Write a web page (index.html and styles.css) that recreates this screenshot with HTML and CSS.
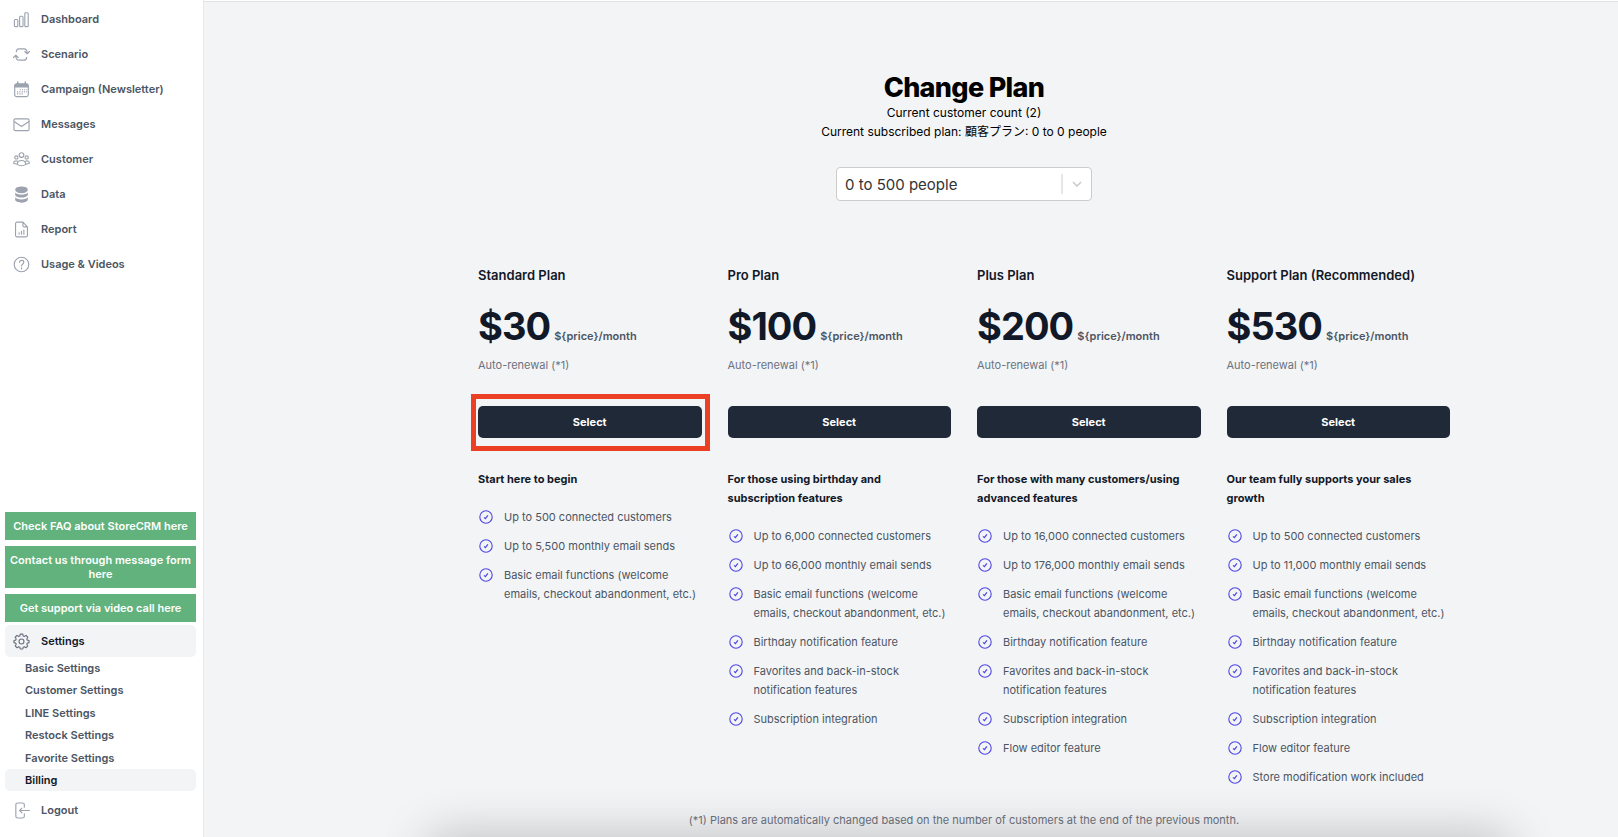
FILE: index.html
```html
<!DOCTYPE html>
<html lang="en">
<head>
    <meta charset="UTF-8">
    <meta name="viewport" content="width=device-width, initial-scale=1.0">
    <title>Change Plan - StoreCRM</title>
    <link rel="stylesheet" href="styles.css">
</head>
<body>
    <svg class="sprite" aria-hidden="true">
        <symbol id="check" viewBox="0 0 16 16">
            <circle cx="8" cy="8" r="6.2" fill="none" stroke="currentColor" stroke-width="1.1"/>
            <path d="M6 8.4l1.4 1.3 2.5-3.4" fill="none" stroke="currentColor" stroke-width="1.2"/>
        </symbol>
    </svg>

    <aside class="sidebar">
        <nav class="nav">
            <a class="nav-item" href="#">
                <svg class="icon" viewBox="0 0 18 18"><rect x="1.5" y="9" width="3.6" height="7.5" rx="1"/><rect x="7" y="5.5" width="3.6" height="11" rx="1"/><rect x="12.5" y="1.8" width="3.6" height="14.7" rx="1"/></svg>
                Dashboard
            </a>
            <a class="nav-item" href="#">
                <svg class="icon" viewBox="0 0 18 18"><path d="M3.500 6C3.700 4 4.800 3 6.500 3h5C14 3 15 4.300 15 8M12.500 5.800L15 8.200l2.500-2.400M14.500 12c-.2 2-1.300 3-3 3h-5C4 15 3 13.700 3 10M.5 12.200L3 9.800l2.500 2.400"/></svg>
                Scenario
            </a>
            <a class="nav-item" href="#">
                <svg class="icon" viewBox="0 0 18 18"><rect x="1.800" y="3" width="14.400" height="13.500" rx="2"/><path class="solid" d="M1.500 6.800V5a2 2 0 0 1 2-2h11a2 2 0 0 1 2 2v1.800z"/><path d="M5 1v3M13 1v3" stroke-width="1.500"/><path class="dots" d="M7 9.300h8M4.300 11.500h10.500M4.300 13.700h7"/></svg>
                Campaign (Newsletter)
            </a>
            <a class="nav-item" href="#">
                <svg class="icon" viewBox="0 0 18 18"><rect x="1" y="3" width="16" height="12.500" rx="1.500"/><path d="M1.500 6L9 11.200 16.500 6"/></svg>
                Messages
            </a>
            <a class="nav-item" href="#">
                <svg class="icon" viewBox="0 0 18 18"><circle cx="9" cy="4.300" r="2.500"/><circle cx="3.500" cy="6.800" r="1.700"/><circle cx="14.500" cy="6.800" r="1.700"/><path d="M4.500 14.200c0-2.700 2-4.200 4.500-4.200s4.500 1.500 4.500 4.200c-1.200.9-2.700 1.400-4.500 1.400s-3.300-.5-4.500-1.400zM4.300 13.700C2.900 13.800 1.500 13.500.6 13c0-2 1.900-3 4.200-2.200M13.700 13.700c1.400.1 2.800-.2 3.700-.7 0-2-1.900-3-4.200-2.200"/></svg>
                Customer
            </a>
            <a class="nav-item" href="#">
                <svg class="icon" viewBox="0 0 18 18"><g class="solid"><ellipse cx="9" cy="4" rx="6.700" ry="3.600"/><path d="M2.300 7c1 1.500 3.600 2.200 6.700 2.200s5.700-.7 6.700-2.200v2c0 1.900-3 3.300-6.700 3.300S2.300 10.900 2.300 9z"/><path d="M2.300 12c1 1.500 3.600 2.200 6.700 2.200s5.700-.7 6.700-2.200v2.400c0 1.900-3 3.300-6.700 3.300s-6.700-1.400-6.700-3.300z"/></g></svg>
                Data
            </a>
            <a class="nav-item" href="#">
                <svg class="icon" viewBox="0 0 18 18"><path d="M10.500 1.200H4.200a1.500 1.500 0 0 0-1.500 1.500v12.600a1.500 1.500 0 0 0 1.500 1.500h9.600a1.500 1.500 0 0 0 1.500-1.500V6.200zM10.500 1.200v3.500a1.500 1.500 0 0 0 1.500 1.500h3.300M6.500 12.500v1.500M9 11v3M11.500 9.500v4.500"/></svg>
                Report
            </a>
            <a class="nav-item" href="#">
                <svg class="icon" viewBox="0 0 18 18"><circle cx="9" cy="9" r="7.700"/><path d="M6.800 6.700c.2-1.300 1.100-2 2.300-2s2.300.8 2.300 2c0 1.700-2.300 1.900-2.300 4M9.100 12.500v1.200"/></svg>
                Usage &amp; Videos
            </a>
        </nav>

        <div class="nav-bottom">
            <div class="help-links">
                <a class="help-link" href="#">Check FAQ about StoreCRM here</a>
                <a class="help-link" href="#">Contact us through message form here</a>
                <a class="help-link" href="#">Get support via video call here</a>
            </div>
            <a class="nav-item active" href="#">
                <svg class="icon" viewBox="0 0 18 18"><path d="M7.600 1.200h2.800l.4 2 1.200.5 1.800-1.100 1.900 1.900-1.100 1.800.5 1.200 1.900.4v2.300l-1.900.5-.5 1.200 1.100 1.800-1.900 1.900-1.800-1.100-1.200.5-.4 1.900H7.600l-.4-1.900-1.200-.5-1.800 1.100-1.900-1.900 1.100-1.800-.5-1.200-1.900-.5V7.900l1.900-.4.5-1.200-1.100-1.800 1.900-1.900L6 3.700l1.200-.5z"/><circle cx="9" cy="9" r="2.600"/></svg>
                Settings
            </a>
            <div class="subnav">
                <a class="subnav-item" href="#">Basic Settings</a>
                <a class="subnav-item" href="#">Customer Settings</a>
                <a class="subnav-item" href="#">LINE Settings</a>
                <a class="subnav-item" href="#">Restock Settings</a>
                <a class="subnav-item" href="#">Favorite Settings</a>
                <a class="subnav-item active" href="#">Billing</a>
            </div>
            <a class="nav-item" href="#">
                <svg class="icon" viewBox="0 0 18 18"><path d="M12 5.500V3a2 2 0 0 0-2-2H5a2 2 0 0 0-2 2v12a2 2 0 0 0 2 2h5a2 2 0 0 0 2-2v-2.500M17.500 9H7M9.500 6.500L7 9l2.500 2.500"/></svg>
                Logout
            </a>
        </div>
    </aside>

    <main class="main">
        <div class="content">
            <header class="page-header">
                <h1>Change Plan</h1>
                <p>Current customer count (2)</p>
                <p>Current subscribed plan: 顧客プラン: 0 to 0 people</p>
            </header>

            <div class="select-box">
                <select class="size-select" aria-label="Number of customers">
                    <option>0 to 500 people</option>
                </select>
                <svg class="select-arrow" viewBox="0 0 30 20"><path d="M1 0v20" stroke-width="1"/><path d="M12 8l4 4 4-4" stroke-width="1.600"/></svg>
            </div>

            <div class="plans">
                <section class="plan">
                    <h2 class="plan-name">Standard Plan</h2>
                    <p class="price"><span class="amount">$30</span> <span class="unit">${price}/month</span></p>
                    <p class="renewal">Auto-renewal (*1)</p>
                    <div class="action highlighted"><button class="select-btn" type="button">Select</button></div>
                    <h3 class="plan-lead">Start here to begin</h3>
                    <ul class="features">
                        <li><svg><use href="#check"/></svg>Up to 500 connected customers</li>
                        <li><svg><use href="#check"/></svg>Up to 5,500 monthly email sends</li>
                        <li><svg><use href="#check"/></svg>Basic email functions (welcome emails, checkout abandonment, etc.)</li>
                    </ul>
                </section>

                <section class="plan">
                    <h2 class="plan-name">Pro Plan</h2>
                    <p class="price"><span class="amount">$100</span> <span class="unit">${price}/month</span></p>
                    <p class="renewal">Auto-renewal (*1)</p>
                    <div class="action"><button class="select-btn" type="button">Select</button></div>
                    <h3 class="plan-lead">For those using birthday and subscription features</h3>
                    <ul class="features">
                        <li><svg><use href="#check"/></svg>Up to 6,000 connected customers</li>
                        <li><svg><use href="#check"/></svg>Up to 66,000 monthly email sends</li>
                        <li><svg><use href="#check"/></svg>Basic email functions (welcome emails, checkout abandonment, etc.)</li>
                        <li><svg><use href="#check"/></svg>Birthday notification feature</li>
                        <li><svg><use href="#check"/></svg>Favorites and back-in-stock notification features</li>
                        <li><svg><use href="#check"/></svg>Subscription integration</li>
                    </ul>
                </section>

                <section class="plan">
                    <h2 class="plan-name">Plus Plan</h2>
                    <p class="price"><span class="amount">$200</span> <span class="unit">${price}/month</span></p>
                    <p class="renewal">Auto-renewal (*1)</p>
                    <div class="action"><button class="select-btn" type="button">Select</button></div>
                    <h3 class="plan-lead">For those with many customers/using advanced features</h3>
                    <ul class="features">
                        <li><svg><use href="#check"/></svg>Up to 16,000 connected customers</li>
                        <li><svg><use href="#check"/></svg>Up to 176,000 monthly email sends</li>
                        <li><svg><use href="#check"/></svg>Basic email functions (welcome emails, checkout abandonment, etc.)</li>
                        <li><svg><use href="#check"/></svg>Birthday notification feature</li>
                        <li><svg><use href="#check"/></svg>Favorites and back-in-stock notification features</li>
                        <li><svg><use href="#check"/></svg>Subscription integration</li>
                        <li><svg><use href="#check"/></svg>Flow editor feature</li>
                    </ul>
                </section>

                <section class="plan">
                    <h2 class="plan-name">Support Plan (Recommended)</h2>
                    <p class="price"><span class="amount">$530</span> <span class="unit">${price}/month</span></p>
                    <p class="renewal">Auto-renewal (*1)</p>
                    <div class="action"><button class="select-btn" type="button">Select</button></div>
                    <h3 class="plan-lead">Our team fully supports your sales growth</h3>
                    <ul class="features">
                        <li><svg><use href="#check"/></svg>Up to 500 connected customers</li>
                        <li><svg><use href="#check"/></svg>Up to 11,000 monthly email sends</li>
                        <li><svg><use href="#check"/></svg>Basic email functions (welcome emails, checkout abandonment, etc.)</li>
                        <li><svg><use href="#check"/></svg>Birthday notification feature</li>
                        <li><svg><use href="#check"/></svg>Favorites and back-in-stock notification features</li>
                        <li><svg><use href="#check"/></svg>Subscription integration</li>
                        <li><svg><use href="#check"/></svg>Flow editor feature</li>
                        <li><svg><use href="#check"/></svg>Store modification work included</li>
                    </ul>
                </section>
            </div>

            <p class="footnote">(*1) Plans are automatically changed based on the number of customers at the end of the previous month.</p>
        </div>
    </main>
    <div class="bottom-shadow"></div>
</body>
</html>
```
FILE: styles.css
```css
:root { --bg: #f3f4f6; --dark: #111827; --text: #4b5563; --muted: #6b7280; --icon: #9ca3af; --green: #61b27c; --indigo: #4f46e5; --red: #ec4024; }
* { box-sizing: border-box; }
body { margin: 0; display: flex; height: 100vh; overflow: hidden; font-family: Inter, "Noto Sans CJK JP", sans-serif; font-size: 11px; line-height: 19px; color: var(--text); background: var(--bg); }
h1, h2, h3, p, ul { margin: 0; padding: 0; }
a { color: inherit; text-decoration: none; }
.sprite { display: none; }

/* sidebar */
.sidebar { flex: none; width: 204px; padding: 3px 7px 11px 5px; display: flex; flex-direction: column; background: #fff; border-right: 1px solid #e5e7eb; }
.nav { display: flex; flex-direction: column; gap: 3px; }
.nav-item { display: flex; align-items: center; gap: 11px; height: 32px; padding: 0 8px; border-radius: 5px; font-weight: 600; }
.nav-item.active, .subnav-item.active { background: var(--bg); color: var(--dark); }
.icon { flex: none; width: 17px; height: 17px; fill: none; stroke: var(--icon); stroke-width: 1.2; stroke-linecap: round; stroke-linejoin: round; }
.icon .solid { fill: var(--icon); stroke: none; }
.icon .dots { stroke-dasharray: 1.2 1.2; stroke-linecap: butt; }
.nav-item.active .icon { stroke: var(--muted); }
.nav-bottom { margin-top: auto; }
.help-links { display: flex; flex-direction: column; gap: 6px; margin-bottom: 3px; }
.help-link { padding: 7px 4px; background: var(--green); color: #fff; font-weight: 600; line-height: 14px; text-align: center; }
.subnav { display: flex; flex-direction: column; justify-content: space-between; height: 134px; margin-bottom: 3px; }
.subnav-item { padding: 0 20px; border-radius: 5px; font-weight: 600; line-height: 22px; }

/* main */
.main { flex: 1; padding: 0 26px 0 132px; border-top: 1px solid #fff; box-shadow: inset 0 1px #e0e2e6; overflow: hidden; }
.content { max-width: 972px; margin: 0 auto; padding-top: 71px; }
.page-header { text-align: center; font-size: 12px; color: #000; }
.page-header h1 { font-size: 27px; line-height: 31px; font-weight: 800; letter-spacing: -0.025em; }
.select-box { position: relative; width: 256px; margin: 26px auto 0; }
.size-select { display: block; width: 100%; height: 34px; padding: 0 8px; appearance: none; background: #fff; border: 1px solid #ccc; border-radius: 4px; color: #333; font-family: inherit; font-size: 15px; }
.select-arrow { position: absolute; top: 7px; right: 1px; width: 30px; height: 20px; fill: none; stroke: #ccc; pointer-events: none; }

.plans { display: grid; grid-template-columns: repeat(4, 1fr); gap: 26px; margin-top: 65px; }
.plan-name { font-size: 13px; line-height: 19px; font-weight: 600; color: var(--dark); }
.price { display: flex; align-items: baseline; gap: 4px; margin-top: 19px; white-space: nowrap; }
.amount { font-size: 38px; line-height: 45px; font-weight: 700; letter-spacing: -0.025em; color: var(--dark); }
.unit { font-weight: 600; }
.renewal { margin-top: 7px; color: var(--muted); }
.action { margin-top: 31px; }
.highlighted { position: relative; }
.highlighted::after { content: ""; position: absolute; inset: -12px -8px -13px -7px; border: 5px solid var(--red); pointer-events: none; }
.select-btn { display: block; width: 100%; height: 32px; padding: 0; border: 0; border-radius: 5px; background: #1f2937; color: #fff; font-family: inherit; font-size: 11px; font-weight: 700; cursor: pointer; }
.plan-lead { margin-top: 32px; font-size: 11px; font-weight: 700; color: var(--dark); }
.features { display: flex; flex-direction: column; gap: 10px; margin-top: 19px; list-style: none; }
.features li { display: flex; gap: 10px; }
.features svg { flex: none; width: 16px; height: 16px; margin-top: 1px; color: var(--indigo); }
.footnote { margin-top: 24px; color: var(--muted); text-align: center; }

/* soft shade along the bottom edge */
.bottom-shadow { position: fixed; left: 440px; right: 120px; bottom: -40px; height: 30px; box-shadow: 0 0 50px 10px rgba(0, 0, 0, 0.24); pointer-events: none; }
```
